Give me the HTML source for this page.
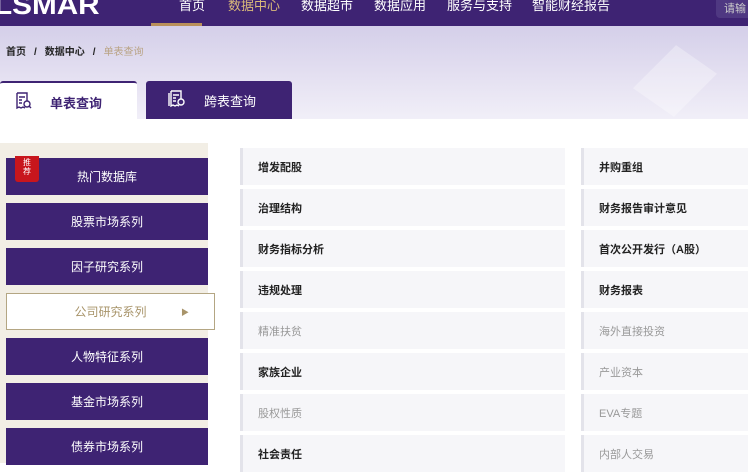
<!DOCTYPE html>
<html><head><meta charset="utf-8"><style>
*{margin:0;padding:0;box-sizing:border-box}
body{width:748px;height:459px;overflow:hidden;background:#fff;font-family:"Liberation Sans","Noto Sans CJK SC",sans-serif;position:relative}
.nav{position:absolute;left:0;top:0;width:748px;height:26px;background:#3e2373}
.logo{position:absolute;left:-6px;top:-10px;color:#fff;font-size:27px;font-weight:bold;letter-spacing:0px;transform:scaleX(1.1);transform-origin:left}
.nav .it{position:absolute;top:-5px;color:#fff;font-size:13px}
.nav .act{color:#d9b97a}
.ul{position:absolute;left:151px;top:23px;width:51px;height:3px;background:#b9905a}
.search{position:absolute;left:716px;top:-6px;width:40px;height:24px;background:#4f3882;border-radius:4px;color:#ccc;font-size:11px;padding:6px 0 0 8px}
.hero{position:absolute;left:0;top:26px;width:748px;height:93px;background:linear-gradient(180deg,#d4cfe9 0%,#e6e2f2 60%,#f1eff8 100%);overflow:hidden}
.diam{position:absolute;left:650px;top:25px;width:50px;height:60px;background:rgba(255,255,255,.3);transform:rotate(35deg) skewX(-10deg)}
.bc{position:absolute;left:6px;top:43px;font-size:10px;color:#222;font-weight:bold}
.bc span{margin:0 8px}
.bc .cur{color:#b9a384;margin:0;font-weight:normal}
.tab1{position:absolute;left:0;top:81px;width:137px;height:38px;background:#fff;border-top:2px solid #3e2373;border-radius:3px 3px 0 0}
.tab2{position:absolute;left:146px;top:81px;width:146px;height:38px;background:#3e2373;border-radius:3px 3px 0 0}
.tab1 b,.tab2 b{position:absolute;top:10px;font-size:13px}
.tab1 b{left:50px;color:#3e2373}
.tab2 b{left:58px;color:#fff;font-weight:normal}
.side{position:absolute;left:0;top:143px;width:208px;height:320px;background:#f2eee5}
.btn{position:absolute;left:6px;width:202px;height:37px;background:#3e2373;color:#fff;font-size:12px;text-align:center;line-height:39px}
.btn.on{background:#fff;color:#a8946a;border:1px solid #b4a683;width:209px;line-height:37px}
.tag{position:absolute;left:15px;top:156px;width:24px;height:26px;background:#c8161d;color:#fff;font-size:8px;line-height:9px;text-align:center;padding-top:2px;border-radius:0 0 3px 3px}
.row{position:absolute;height:37px;background:#f6f6f9;border-left:3px solid #e3e3ea;font-size:11px;font-weight:bold;color:#222;line-height:40px;padding-left:15px}
.row.g{color:#999;font-weight:normal}
.c1{left:240px;width:325px}.c2{left:581px;width:167px}
</style></head><body>
<div class="nav">
<div class="logo">LSMAR</div>
<div class="it" style="left:179px">首页</div>
<div class="it act" style="left:228px">数据中心</div>
<div class="it" style="left:301px">数据超市</div>
<div class="it" style="left:374px">数据应用</div>
<div class="it" style="left:447px">服务与支持</div>
<div class="it" style="left:532px">智能财经报告</div>
<div class="ul"></div>
<div class="search">请输</div>
</div>
<div class="hero"><div class="diam"></div></div>
<div class="bc">首页<span>/</span>数据中心<span>/</span><span class="cur">单表查询</span></div>
<div class="tab1"><svg style="position:absolute;left:15px;top:9px" width="18" height="18" viewBox="0 0 18 18" fill="none" stroke="#3e2373" stroke-width="1.4"><path d="M2 1h10v8M2 1v15l2-1 2 1 2-1 2 1"/><path d="M4 5h6M4 8h3M4 11h3"/><circle cx="12" cy="12" r="3"/><path d="M14 14l2 2"/></svg><b>单表查询</b></div>
<div class="tab2"><svg style="position:absolute;left:22px;top:9px" width="18" height="18" viewBox="0 0 18 18" fill="none" stroke="#fff" stroke-width="1.4"><path d="M1 3v13M3 1h10v8M3 1v15l2-1 2 1 2-1 2 1"/><path d="M5 5h6M5 8h3M5 11h3"/><circle cx="13" cy="12" r="3"/></svg><b>跨表查询</b></div>
<div class="side"></div>
<div class="btn" style="top:158px">热门数据库</div>
<div class="tag">推<br>荐</div>
<div class="btn" style="top:203px">股票市场系列</div>
<div class="btn" style="top:248px">因子研究系列</div>
<div class="btn on" style="top:293px">公司研究系列<span style="position:absolute;left:174px;font-size:8px">▶</span></div>
<div class="btn" style="top:338px">人物特征系列</div>
<div class="btn" style="top:383px">基金市场系列</div>
<div class="btn" style="top:428px">债券市场系列</div>
<div class="row c1" style="top:148px">增发配股</div><div class="row c2" style="top:148px">并购重组</div>
<div class="row c1" style="top:189px">治理结构</div><div class="row c2" style="top:189px">财务报告审计意见</div>
<div class="row c1" style="top:230px">财务指标分析</div><div class="row c2" style="top:230px">首次公开发行（A股）</div>
<div class="row c1" style="top:271px">违规处理</div><div class="row c2" style="top:271px">财务报表</div>
<div class="row c1 g" style="top:312px">精准扶贫</div><div class="row c2 g" style="top:312px">海外直接投资</div>
<div class="row c1" style="top:353px">家族企业</div><div class="row c2 g" style="top:353px">产业资本</div>
<div class="row c1 g" style="top:394px">股权性质</div><div class="row c2 g" style="top:394px">EVA专题</div>
<div class="row c1" style="top:435px">社会责任</div><div class="row c2 g" style="top:435px">内部人交易</div>
</body></html>
